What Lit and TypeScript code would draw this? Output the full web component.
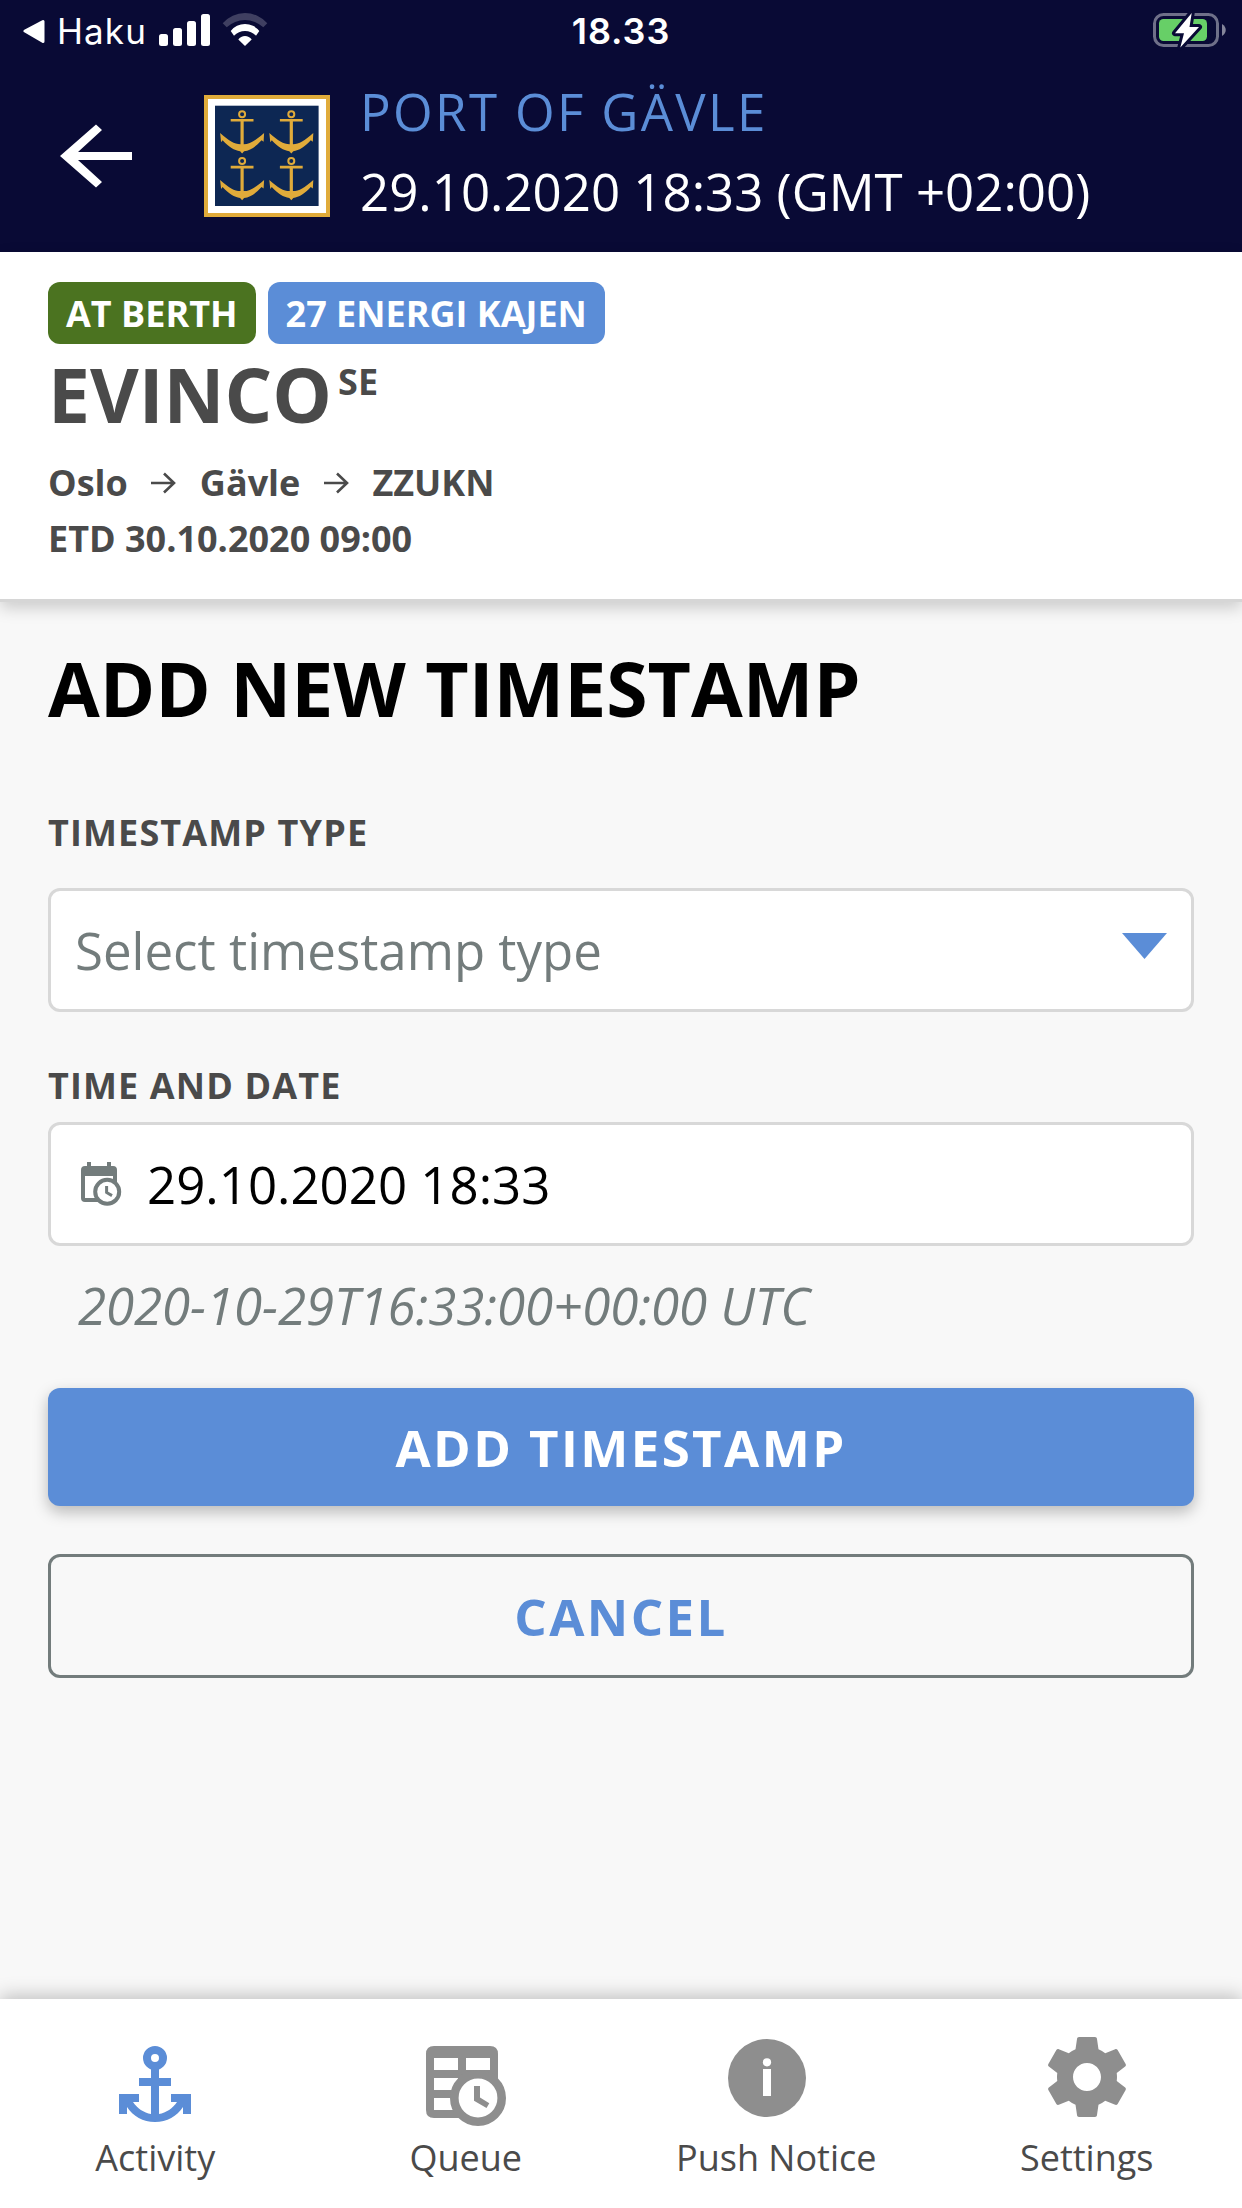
import { LitElement, html, css, svg } from "lit";
import { customElement, property } from "lit/decorators.js";

const sans = css`"Open Sans", "Noto Sans", sans-serif`;

@customElement("status-bar")
class StatusBar extends LitElement {
  static styles = css`
    :host {
      display: grid;
      grid-template-columns: 1fr auto 1fr;
      height: 60px;
      color: #fff;
      font: 400 36px/62px Inter, "Liberation Sans", sans-serif;
      overflow: hidden;
    }
    .left { display: flex; padding-left: 23px; }
    .back { width: 22px; height: 60px; margin-right: 12px; }
    .app { width: 102px; letter-spacing: 1.1px; font-size: 35px; white-space: nowrap; }
    .signal { width: 51px; height: 60px; margin-right: 12px; }
    .wifi { width: 46px; height: 60px; }
    .time { font-weight: 600; letter-spacing: 0.9px; }
    .right { display: flex; justify-content: flex-end; padding-right: 16px; }
    .battery { width: 73px; height: 60px; }
  `;
  render() {
    return html`
      <div class="left">
        <svg class="back" viewBox="0 0 22 60"><path d="M2 31 20 21.500V41.500Z" fill="#fff" stroke="#fff" stroke-width="3" stroke-linejoin="round"/></svg>
        <span class="app">Haku</span>
        <svg class="signal" viewBox="0 0 51 60" fill="#fff">
          <rect x="0" y="34" width="9" height="12" rx="2.500"/>
          <rect x="14" y="28" width="9" height="18" rx="2.500"/>
          <rect x="28" y="21" width="9" height="25" rx="2.500"/>
          <rect x="42" y="14" width="9" height="32" rx="2.500"/>
        </svg>
        <svg class="wifi" viewBox="0 0 46 60" fill="#fff">
          <path fill-opacity=".22" d="M.7 23.300A29.300 29.300 0 0 1 45.300 23.300L41.300 27.300A26.600 26.600 0 0 0 4.700 27.300Z"/>
          <path d="M8.700 31A18.100 18.100 0 0 1 37.300 31L34 35.700A15.200 15.200 0 0 0 12 35.700Z"/>
          <path d="M16.300 39.500A8.200 8.200 0 0 1 29.700 39.500L23 46Z"/>
        </svg>
      </div>
      <span class="time">18.33</span>
      <div class="right">
        <svg class="battery" viewBox="0 0 73 60">
          <rect x="1.500" y="14.500" width="63" height="31" rx="9" fill="none" stroke="#6f7089" stroke-width="3"/>
          <rect x="6" y="19" width="48" height="22" rx="4.500" fill="#67cf67"/>
          <path d="M69 24C74 27 74 33 69 36Z" fill="#84859a"/>
          <path d="M38.700 13 22 33.200H31L27.300 47.500 46 27H36.500Z" fill="#fff" stroke="#090a35" stroke-width="6" stroke-linejoin="round" paint-order="stroke"/>
        </svg>
      </div>
    `;
  }
}

@customElement("port-crest")
class PortCrest extends LitElement {
  static styles = css`
    :host { display: block; width: 126px; height: 122px; }
    .crest { display: block; width: 126px; height: 122px; }
  `;
  private anchor(x: number, y: number) {
    return svg`<g transform="translate(${x} ${y})">
      <circle cx="0" cy="0" r="3" fill="none" stroke="#e0ab3a" stroke-width="2"/>
      <path d="M-11.400 4.700H11.400V7.300H1.600V30C8 30 13 26.500 22 18.800L21.500 27.500 19.500 26C13 33 8 36 2 37L0 39.200-2 37C-8 36-13 33-19.500 26L-21 28-22 18.800C-13 26.500-8 30-1.600 30V7.300H-11.400Z" fill="#e0ab3a"/>
    </g>`;
  }
  render() {
    return html`<svg class="crest" viewBox="0 0 126 122">
      <rect width="126" height="122" fill="#e0ab3a"/>
      <rect x="4" y="4" width="118" height="114" fill="#fff"/>
      <rect x="11" y="10.700" width="103.600" height="100.300" fill="#0d2753"/>
      ${this.anchor(38.1, 19.3)}${this.anchor(87.3, 19.3)}
      ${this.anchor(38.1, 66.1)}${this.anchor(87.3, 66.1)}
    </svg>`;
  }
}

@customElement("port-header")
class PortHeader extends LitElement {
  static styles = css`
    :host {
      display: flex;
      align-items: center;
      height: 192px;
      padding-left: 60px;
      font: 400 51px/80px ${sans};
      color: #fff;
    }
    .arrow { width: 72px; height: 64px; margin-right: 72px; }
    .text { margin: 0 0 10px 30px; white-space: nowrap; }
    .port { color: #5b8dd7; letter-spacing: 2.35px; }
  `;
  render() {
    return html`
      <svg class="arrow" viewBox="0 0 72 64"><path fill="#fff" d="M0 32 36 .5 42 6 18 28H72V36H18L42 58 36 63.500Z"/></svg>
      <port-crest></port-crest>
      <div class="text">
        <div class="port">PORT OF GÄVLE</div>
        <div>29.10.2020 18:33 (GMT +02:00)</div>
      </div>
    `;
  }
}

@customElement("ship-card")
class ShipCard extends LitElement {
  static styles = css`
    :host {
      display: block;
      position: relative;
      box-sizing: border-box;
      height: 350px;
      padding: 30px 48px 0;
      background: #fff;
      border-bottom: 3px solid #d6d6d6;
      box-shadow: 0 6px 15px rgba(0, 0, 0, 0.18);
      color: #4a4a4a;
      font: 700 36px/56px ${sans};
      white-space: nowrap;
    }
    .badges { display: flex; gap: 12px; }
    .badge {
      height: 62px;
      padding: 0 18px;
      border-radius: 12px;
      line-height: 64px;
      color: #fff;
      background: #5b8dd7;
    }
    .berth { background: #4b7320; }
    .name { display: flex; gap: 6px; margin-bottom: 11px; font-size: 75px; line-height: 100px; }
    .flag { font-size: 36px; line-height: 76px; }
    .route { display: flex; align-items: center; gap: 23.5px; }
    .to { width: 25px; height: 22px; }
  `;
  render() {
    const to = html`<svg class="to" viewBox="0 0 25 22" fill="none" stroke="#4a4a4a" stroke-width="2.600"><path d="M0 11H23M13 1.500 23 11 13 20.500"/></svg>`;
    return html`
      <div class="badges"><span class="badge berth">AT BERTH</span><span class="badge">27 ENERGI KAJEN</span></div>
      <div class="name"><span>EVINCO</span><span class="flag">SE</span></div>
      <div class="route"><span>Oslo</span>${to}<span>Gävle</span>${to}<span>ZZUKN</span></div>
      <div>ETD 30.10.2020 09:00</div>
    `;
  }
}

@customElement("timestamp-form")
class TimestampForm extends LitElement {
  static styles = css`
    :host {
      display: flex;
      flex-direction: column;
      padding: 36px 48px 0;
      font: 400 51px/80px ${sans};
      color: #000;
      white-space: nowrap;
    }
    .title { font-weight: 700; font-size: 75px; line-height: 100px; }
    .label {
      color: #4a4a4a;
      font-weight: 700;
      font-size: 36px;
      line-height: 50px;
      letter-spacing: 1.13px;
    }
    .type { margin: 70px 0 30px; }
    .date { margin: 49px 0 11px; }
    .field {
      display: flex;
      align-items: center;
      box-sizing: border-box;
      height: 124px;
      border: 3px solid #d8d8d8;
      border-radius: 12px;
      background: #fff;
      padding: 0 24px;
    }
    .select { justify-content: space-between; color: #737c7c; }
    .caret { width: 45px; height: 26px; margin-bottom: 8px; }
    .calendar { width: 42px; height: 46px; margin: 0 24px 0 6px; }
    .utc { margin: 19px 0 43px 30px; color: #737c7c; font-style: italic; letter-spacing: -0.06px; }
    .button {
      box-sizing: border-box;
      height: 118px;
      border-radius: 12px;
      background: #5b8dd7;
      color: #fff;
      font-weight: 700;
      line-height: 118px;
      letter-spacing: 2.4px;
      text-align: center;
      box-shadow: 0 6px 15px rgba(0, 0, 0, 0.26);
    }
    .cancel {
      height: 124px;
      margin-top: 48px;
      border: 3px solid #737c7c;
      background: none;
      color: #5b8dd7;
      box-shadow: none;
    }
  `;
  render() {
    return html`
      <div class="title">ADD NEW TIMESTAMP</div>
      <div class="label type">TIMESTAMP TYPE</div>
      <div class="field select">
        <span>Select timestamp type</span>
        <svg class="caret" viewBox="0 0 45 26"><path d="M0 0H45L22.500 26Z" fill="#5b8dd7"/></svg>
      </div>
      <div class="label date">TIME AND DATE</div>
      <div class="field">
        <svg class="calendar" viewBox="0 0 42 46">
          <path fill="#737c7c" fill-rule="evenodd" d="M6 1H10V5H26V1H30V5H32Q36 5 36 9V37Q36 41 32 41H4Q0 41 0 37V9Q0 5 4 5H6ZM4 15V37H32V15Z"/>
          <circle cx="26.200" cy="30.800" r="12" fill="#fff" stroke="#737c7c" stroke-width="4"/>
          <path d="M25.600 25V31.500L31 34.600" fill="none" stroke="#737c7c" stroke-width="3"/>
        </svg>
        <span>29.10.2020 18:33</span>
      </div>
      <div class="utc">2020-10-29T16:33:00+00:00 UTC</div>
      <div class="button">ADD TIMESTAMP</div>
      <div class="button cancel">CANCEL</div>
    `;
  }
}

const icons = {
  activity: svg`<g fill="#5b8dd7">
    <circle cx="48" cy="24" r="8" fill="none" stroke="#5b8dd7" stroke-width="8"/>
    <path d="M44 34H52V44H64V52H52V80C59 79 66 74 70 68H64V60H84V80H76V73C70 82 60 88 48 88S26 82 20 73V80H12V60H32V68H26C30 74 37 79 44 80V52H32V44H44Z"/>
  </g>`,
  queue: svg`<g>
    <path fill="#8e8e8e" fill-rule="evenodd" d="M16 12H72Q80 12 80 20V84H16Q8 84 8 76V20Q8 12 16 12ZM16 24V36H40V24ZM48 24V36H72V24ZM16 44V56H40V44ZM16 64V76H40V64Z"/>
    <path fill="#fff" d="M60 64H90V94H60Z"/>
    <circle cx="60" cy="64" r="23.700" fill="#fff" stroke="#8e8e8e" stroke-width="8.600"/>
    <path fill="#8e8e8e" d="M56 52H62V63.500L71.300 69.300 68.500 74 56 66.800Z"/>
  </g>`,
  push: svg`<g>
    <circle cx="48" cy="44" r="39" fill="#8e8e8e"/>
    <circle cx="48" cy="28.300" r="4.100" fill="#fff"/>
    <path d="M44 35H52V62H44Z" fill="#fff"/>
  </g>`,
  settings: svg`<path transform="translate(0 -5) scale(4)" fill="#8e8e8e" d="M19.430 12.980c.04-.32.07-.64.07-.98s-.03-.66-.07-.98l2.110-1.650c.19-.15.24-.42.12-.64l-2-3.460c-.12-.22-.39-.3-.61-.22l-2.490 1c-.52-.4-1.080-.73-1.690-.98l-.38-2.650C14.460 2.180 14.250 2 14 2h-4c-.25 0-.46.18-.49.42l-.38 2.650c-.61.25-1.170.59-1.690.98l-2.490-1c-.23-.09-.49 0-.61.22l-2 3.460c-.13.22-.07.49.12.64l2.110 1.650c-.04.32-.07.65-.07.98s.03.66.07.98l-2.110 1.650c-.19.15-.24.42-.12.64l2 3.460c.12.22.39.3.61.22l2.490-1c.52.4 1.080.73 1.690.98l.38 2.650c.03.24.24.42.49.42h4c.25 0 .46-.18.49-.42l.38-2.650c.61-.25 1.170-.59 1.690-.98l2.490 1c.23.09.49 0 .61-.22l2-3.460c.12-.22.07-.49-.12-.64l-2.110-1.650zM12 15.500c-1.930 0-3.500-1.570-3.500-3.500s1.570-3.500 3.500-3.500 3.500 1.570 3.500 3.500-1.570 3.500-3.500 3.500z"/>`,
};

@customElement("tab-item")
class TabItem extends LitElement {
  @property() icon: keyof typeof icons = "activity";
  @property() label = "";
  static styles = css`
    :host {
      display: flex;
      flex-direction: column;
      align-items: center;
      padding-top: 35px;
      color: #4a4a4a;
      font: 400 36px/56px ${sans};
      white-space: nowrap;
    }
    .icon { width: 96px; height: 96px; }
    .push { margin-right: 18px; }
  `;
  render() {
    return html`<svg class="icon ${this.icon}" viewBox="0 0 96 96">${icons[this.icon]}</svg><span>${this.label}</span>`;
  }
}

@customElement("app-root")
class AppRoot extends LitElement {
  static styles = css`
    :host {
      display: flex;
      flex-direction: column;
      width: 1242px;
      height: 2208px;
      background: #f8f8f8;
      overflow: hidden;
    }
    .top { background: #090a35; }
    .form { flex: 1; }
    .tabs {
      display: grid;
      grid-template-columns: repeat(4, 1fr);
      height: 209px;
      background: #fff;
      box-shadow: 0 -3px 18px rgba(0, 0, 0, 0.24);
    }
  `;
  render() {
    return html`
      <div class="top"><status-bar></status-bar><port-header></port-header></div>
      <ship-card></ship-card>
      <timestamp-form class="form"></timestamp-form>
      <nav class="tabs">
        <tab-item icon="activity" label="Activity"></tab-item>
        <tab-item icon="queue" label="Queue"></tab-item>
        <tab-item icon="push" label="Push Notice"></tab-item>
        <tab-item icon="settings" label="Settings"></tab-item>
      </nav>
    `;
  }
}
